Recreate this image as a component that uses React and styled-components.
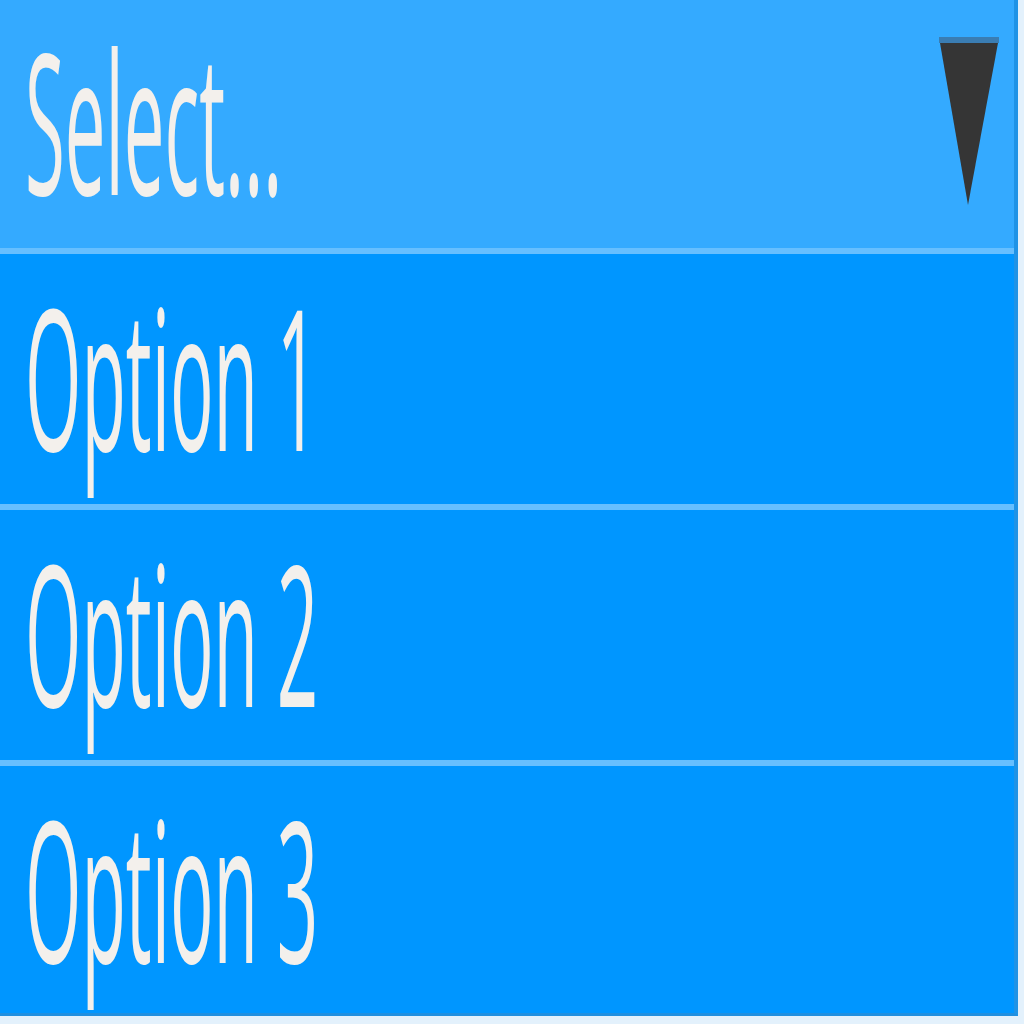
import React from "react";
import styled, { createGlobalStyle } from "styled-components";

const Global = createGlobalStyle`
  html, body { margin: 0; padding: 0; background: #e3f1fc; }
  body { font-family: "Open Sans", "Noto Sans", sans-serif; }
`;

const Dropdown = styled.div`
  width: 1018px;
  height: 1016px;
  display: flex;
  flex-direction: column;
  gap: 6px;
  background: #66bfff;
  border-right: 4px solid #1f93e6;
  border-bottom: 3px solid #1f8fe0;
  box-sizing: border-box;
  overflow: hidden;
`;

const Row = styled.div`
  flex: 0 0 ${(p) => p.$h}px;
  display: flex;
  align-items: center;
  justify-content: space-between;
  padding-left: 25px;
  padding-right: 15px;
  background: ${(p) => (p.$header ? "#34aaff" : "#0096ff")};
  color: #f3f0ec;
  box-sizing: border-box;
`;

const Label = styled.span`
  display: inline-block;
  font-size: 196px;
  line-height: 1;
  font-weight: 500;
  transform: scaleX(0.37);
  transform-origin: left center;
  white-space: nowrap;
  margin-top: ${(p) => p.$mt || 0}px;
`;

const Caret = styled.svg`
  width: 60px;
  height: 168px;
  margin-bottom: 7px;
  flex: none;
`;

export default function App() {
  return (
    <>
      <Global />
      <Dropdown>
        <Row $header $h={248}>
          <Label $mt={-10}>Select...</Label>
          <Caret viewBox="0 0 60 168">
            <rect x="0" y="0" width="60" height="6" fill="#3a7db3" />
            <polygon points="1,6 59,6 29,168" fill="#353535" />
          </Caret>
        </Row>
        <Row $h={250}>
          <Label $mt={-8}>Option 1</Label>
        </Row>
        <Row $h={250}>
          <Label $mt={-8}>Option 2</Label>
        </Row>
        <Row $h={250}>
          <Label $mt={-8}>Option 3</Label>
        </Row>
      </Dropdown>
    </>
  );
}
